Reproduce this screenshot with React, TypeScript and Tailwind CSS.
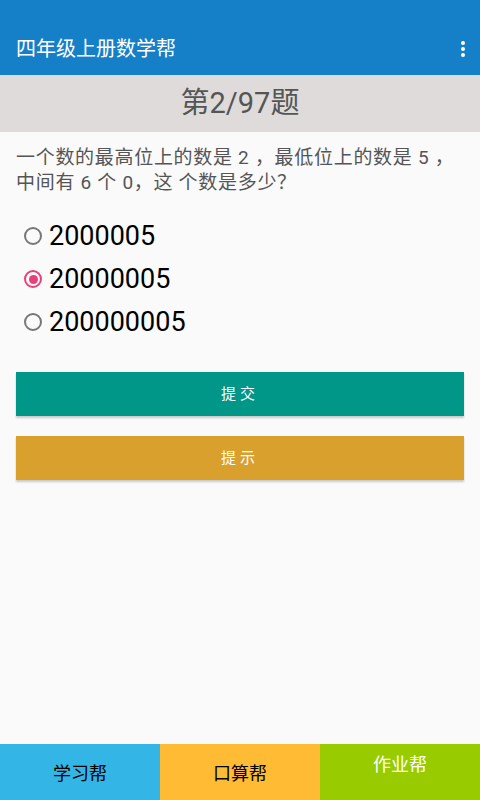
export default function App() {
  const options = ["2000005", "20000005", "200000005"];
  const selected = 1;
  const font = { fontFamily: '"Roboto", "Noto Sans CJK SC", sans-serif' };

  return (
    <div className="flex h-[800px] w-[480px] flex-col bg-[#fafafa]" style={font}>
      <header className="flex h-[75px] items-center justify-between bg-[#1580c8] pl-[16px] pr-[14px] pt-[22px] text-white shadow-md">
        <h1 className="text-[20px] leading-none">四年级上册数学帮</h1>
        <svg width="6" height="18" viewBox="0 0 6 18" fill="white">
          <circle cx="3" cy="3" r="2" />
          <circle cx="3" cy="9" r="2" />
          <circle cx="3" cy="15" r="2" />
        </svg>
      </header>

      <div className="flex h-[57px] items-center justify-center bg-[#dedbda] text-[29px] text-[#555555]">
        第2/97题
      </div>

      <main className="flex flex-1 flex-col px-[16px]">
        <p className="mt-[13px] whitespace-nowrap text-[19px] leading-[25px] tracking-[0.7px] text-[#555555]">
          一个数的最高位上的数是 2 ，最低位上的数是 5 ，
          <br />
          中间有 6 个 0，这 个数是多少？
        </p>

        <div className="mt-[27px] flex flex-col gap-[15px]">
          {options.map((o, i) => (
            <label key={o} className="flex h-[28px] items-center gap-[7px]">
              {i === selected ? (
                <span className="ml-[8px] flex h-[18px] w-[18px] items-center justify-center rounded-full border-2 border-[#e9407a]">
                  <span className="h-[9px] w-[9px] rounded-full bg-[#e9407a]" />
                </span>
              ) : (
                <span className="ml-[8px] h-[18px] w-[18px] rounded-full border-2 border-[#777777]" />
              )}
              <span className="text-[27px] leading-none text-black">{o}</span>
            </label>
          ))}
        </div>

        <button className="mt-[36px] h-[44px] w-full bg-[#009688] text-[15px] tracking-[4px] text-white shadow-[0_2px_2px_rgba(0,0,0,0.2)]">
          提交
        </button>
        <button className="mt-[20px] h-[44px] w-full bg-[#d9a02d] text-[15px] tracking-[4px] text-white shadow-[0_2px_2px_rgba(0,0,0,0.2)]">
          提示
        </button>
      </main>

      <nav className="grid h-[56px] grid-cols-3 text-[18px]">
        <div className="flex items-center justify-center bg-[#33b5e5] pt-[2px] text-black">学习帮</div>
        <div className="flex items-center justify-center bg-[#ffbb33] pt-[2px] text-black">口算帮</div>
        <div className="flex items-start justify-center bg-[#99cc00] pt-[7px] text-white">作业帮</div>
      </nav>
    </div>
  );
}
